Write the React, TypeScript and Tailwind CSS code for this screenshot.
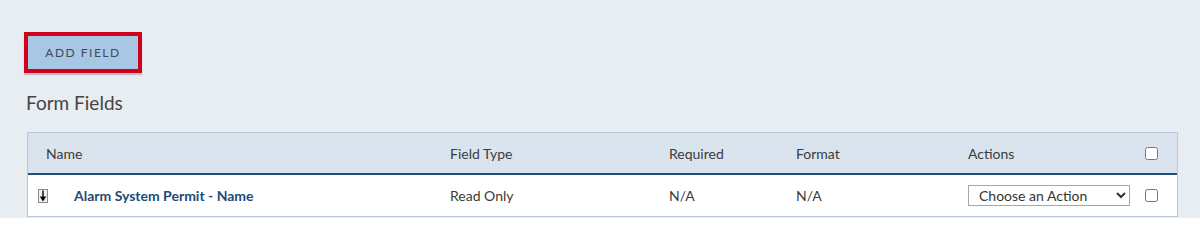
import React from 'react';

const font = { fontFamily: 'Lato, "Open Sans", sans-serif' };

export default function App() {
  return (
    <div className="h-[218px] w-full overflow-hidden bg-[#e8edf2] text-[#333]" style={font}>
      <div className="pl-[24px] pr-[22px] pt-[32px]">
        {/* Add field button with focus ring */}
        <button className="flex h-[41px] w-[118px] items-center justify-center border-[4px] border-[#d0021b] bg-[#a8c7e5] text-[12px] tracking-[1.5px] text-[#3d4b5c] shadow-[0_2px_1px_rgba(0,0,0,0.18)]">
          ADD FIELD
        </button>

        <h2 className="mt-[17px] pl-[2px] text-[19px] leading-[26px] text-[#444]">Form Fields</h2>

        <div className="mt-[16px] ml-[3px] border border-[#b9c7d7] bg-white">
          {/* Header */}
          <div className="grid h-[42px] grid-cols-[404px_219px_127px_172px_177px_1fr] items-center border-b-2 border-[#1c4f7c] bg-[#dae4ef] pl-[18px] text-[14px] text-[#3b3b3b]">
            <div>Name</div>
            <div>Field Type</div>
            <div>Required</div>
            <div>Format</div>
            <div>Actions</div>
            <div className="flex items-center">
              <input type="checkbox" className="h-[13px] w-[13px]" />
            </div>
          </div>

          {/* Row */}
          <div className="grid h-[41px] grid-cols-[412px_219px_127px_172px_177px_1fr] items-center pl-[10px] text-[14px] text-[#3b3b3b]">
            <div className="flex items-center">
              <span className="flex h-[14px] w-[10px] items-center justify-center border border-[#8a8a8a] bg-[#f0f0f0]">
                <svg width="8" height="12" viewBox="0 0 8 12">
                  <path d="M4 0.5 V8" stroke="#000" strokeWidth="1.4" />
                  <path d="M0.8 6.5 L4 11.5 L7.2 6.5 Z" fill="#000" />
                </svg>
              </span>
              <span className="ml-[26px] font-bold text-[#1f4b73]">Alarm System Permit - Name</span>
            </div>
            <div>Read Only</div>
            <div>N/A</div>
            <div>N/A</div>
            <div>
              <select className="h-[21px] w-[162px] border border-[#a6a6a6] bg-white pl-[6px] text-[14px] text-[#333]" style={font}>
                <option>Choose an Action</option>
                <option>Edit</option>
                <option>Delete</option>
              </select>
            </div>
            <div className="flex items-center">
              <input type="checkbox" className="h-[13px] w-[13px]" />
            </div>
          </div>
        </div>
      </div>
    </div>
  );
}
